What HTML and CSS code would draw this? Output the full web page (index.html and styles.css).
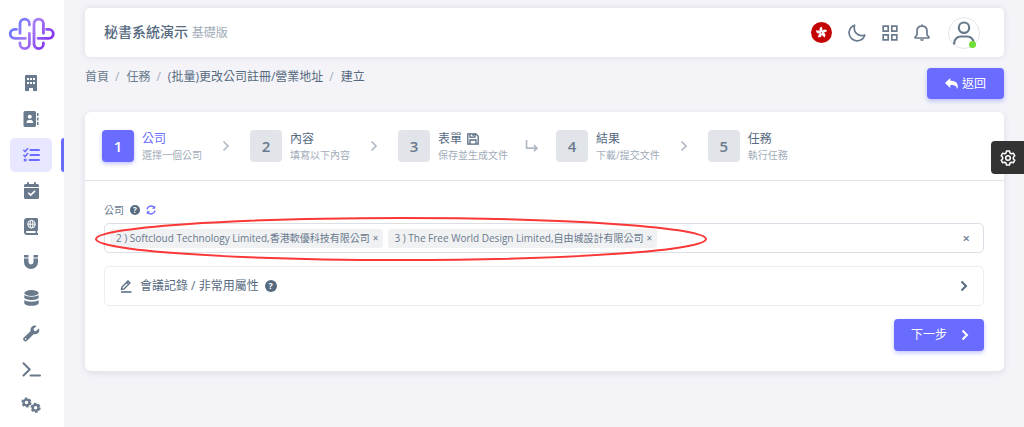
FILE: index.html
```html
<!DOCTYPE html>
<html lang="zh-Hant">
<head>
<meta charset="utf-8">
<meta name="viewport" content="width=device-width, initial-scale=1">
<title>秘書系統演示</title>
<link rel="stylesheet" href="styles.css">
</head>
<body>
<aside class="sidebar">
  <a class="logo" href="#" aria-label="主頁">
    <svg width="48" height="34" viewBox="0 0 48 34" fill="none" stroke="url(#brand)" stroke-width="2.800" stroke-linecap="round">
      <defs><linearGradient id="brand" gradientUnits="userSpaceOnUse" x1="4" y1="4" x2="42" y2="30"><stop offset="0" stop-color="#5a78ff"/><stop offset=".45" stop-color="#a77bf5"/><stop offset="1" stop-color="#7a2bea"/></linearGradient></defs>
      <path d="M12 16.300V6.800a4.700 4.700 0 0 1 9.400 0V8"/>
      <path d="M26 16.300V6.800a4.700 4.700 0 0 1 9.400 0V16.300"/>
      <path d="M8.500 12.300H6.700a4.500 4.500 0 0 0 0 9H17.500"/>
      <path d="M38.500 12.300h2.300a4.500 4.500 0 0 1 0 9H30"/>
      <path d="M21.400 16.500V27a4.700 4.700 0 0 1-9.400 0v-1"/>
      <path d="M26 16.500V27a4.700 4.700 0 0 0 9.400 0v-1"/>
    </svg>
  </a>
  <nav class="menu" aria-label="主選單">
    <a href="#" aria-label="公司"><svg width="14" height="18" viewBox="0 0 14 18"><path fill="currentColor" fill-rule="evenodd" d="M2 1h10a1 1 0 0 1 1 1v15H9v-3H5v3H1V2a1 1 0 0 1 1-1ZM3 4v2h2V4Zm3 0v2h2V4Zm3 0v2h2V4ZM3 8v2h2V8Zm3 0v2h2V8Zm3 0v2h2V8Z"/></svg></a>
    <a href="#" aria-label="聯絡人"><svg width="16" height="16" viewBox="0 0 16 16"><path fill="currentColor" fill-rule="evenodd" d="M2 0h9.500a1.500 1.500 0 0 1 1.500 1.500v13a1.500 1.500 0 0 1-1.500 1.500H2a1.500 1.500 0 0 1-1.500-1.500v-13A1.500 1.500 0 0 1 2 0Zm4.800 3.700a2 2 0 1 0 0 4.100 2 2 0 0 0 0-4.100ZM3.500 12h6.600c0-2-1-3-2.300-3h-2c-1.300 0-2.300 1-2.300 3ZM14 2h1.500v3H14Zm0 4.500h1.500v3H14ZM14 11h1.500v3H14Z"/></svg></a>
    <a class="active" href="#" aria-label="任務" aria-current="page"><svg width="17" height="14" viewBox="0 0 17 14" fill="none" stroke="currentColor" stroke-width="2" stroke-linecap="round"><path d="M7.500 2H16M7.500 7H16M6.500 12H16"/><path stroke-width="1.500" d="m.8 2.300 1.300 1.300 2.600-3M.8 7.300l1.300 1.300 2.600-3"/><circle cx="2.200" cy="12" r=".6"/></svg></a>
    <a href="#" aria-label="行事曆"><svg width="15" height="17" viewBox="0 0 15 17"><path fill="currentColor" fill-rule="evenodd" d="M3 1a1 1 0 0 1 2 0v1h5V1a1 1 0 0 1 2 0v1h1.500A1.500 1.500 0 0 1 15 3.500V5H0V3.500A1.500 1.500 0 0 1 1.500 2H3ZM0 6h15v9.500a1.500 1.500 0 0 1-1.500 1.500h-12A1.500 1.500 0 0 1 0 15.500Zm10.500 2.300L6.700 12 4.800 10.200l-1.100 1.100 3 2.900L11.600 9.400Z"/></svg></a>
    <a href="#" aria-label="法例"><svg width="14" height="17" viewBox="0 0 14 17"><path fill="currentColor" fill-rule="evenodd" d="M3 0h10a1 1 0 0 1 1 1v11l-.8 1v2H14v2H3a3 3 0 0 1-3-3V3a3 3 0 0 1 3-3Zm0 13a1 1 0 0 0 0 2h8.500v-2Z"/><g fill="none" stroke="#fff" stroke-width="1"><circle cx="7.500" cy="6.200" r="3.800"/><ellipse cx="7.500" cy="6.200" rx="1.500" ry="3.800"/><path d="M3.700 6.200h7.600"/></g></svg></a>
    <a href="#" aria-label="磁鐵"><svg width="14" height="15" viewBox="0 0 14 15"><path fill="currentColor" d="M0 1h4.500v2.500H0ZM9.500 1H14v2.500H9.500ZM0 4.500h4.500V8a2.500 2.500 0 0 0 5 0V4.500H14V8A7 7 0 0 1 0 8Z"/></svg></a>
    <a href="#" aria-label="資料庫"><svg width="15" height="16" viewBox="0 0 15 16" fill="currentColor"><ellipse cx="7.500" cy="3" rx="7.200" ry="2.900"/><path d="M.3 5c2.500 2.300 11.900 2.300 14.400 0v2.700c-1 3-13.400 3-14.400 0ZM.3 10c2.500 2.300 11.900 2.300 14.400 0v3.200c-1 3.500-13.400 3.500-14.400 0Z"/></svg></a>
    <a href="#" aria-label="工具"><svg width="17" height="17" viewBox="0 0 17 17"><path fill="currentColor" fill-rule="evenodd" d="M15.900 3.300 13 6.200l-2-.4-.4-2 2.900-2.900C10.500-.3 6.900 2 7.500 6.200L.9 12.600a2.100 2.100 0 0 0 3.200 3.200l6.500-6.500c4.300.5 6.700-2.500 5.300-6ZM2.700 13.300a.8.8 0 1 1 0 1.600.8.800 0 0 1 0-1.600Z"/></svg></a>
    <a href="#" aria-label="終端"><svg width="19" height="15" viewBox="0 0 19 15" fill="none" stroke="currentColor" stroke-width="2" stroke-linecap="round" stroke-linejoin="round"><path d="m1.500 1.200 6.200 6.300-6.200 6M8.500 13.500h9.500"/></svg></a>
    <a href="#" aria-label="設定"><svg width="20" height="16" viewBox="0 0 20 16" fill="none" stroke="currentColor"><circle cx="5.500" cy="5.500" r="2.900" stroke-width="2.300"/><circle cx="5.500" cy="5.500" r="4.300" stroke-width="1.600" stroke-dasharray="2.500 2"/><circle cx="14.600" cy="10.800" r="2.900" stroke-width="2.300"/><circle cx="14.600" cy="10.800" r="4.300" stroke-width="1.600" stroke-dasharray="2.500 2"/></svg></a>
  </nav>
</aside>

<main class="page">
  <header class="navbar">
    <h1 class="brand">秘書系統演示 <small>基礎版</small></h1>
    <div class="tools">
      <button type="button" aria-label="語言"><svg width="21" height="21" viewBox="0 0 21 21"><circle cx="10.500" cy="10.500" r="10.500" fill="#c40404"/><g fill="#fff"><path id="petal" d="M10.500 10.300C7.500 8.700 8 5 11.200 4.700c-.8 1.500 1.800 3.300-.7 5.600Z"/><use href="#petal" transform="rotate(72 10.500 10.500)"/><use href="#petal" transform="rotate(144 10.500 10.500)"/><use href="#petal" transform="rotate(216 10.500 10.500)"/><use href="#petal" transform="rotate(288 10.500 10.500)"/></g></svg></button>
      <button type="button" aria-label="深色模式"><svg width="18" height="18" viewBox="0 0 18 18" fill="none" stroke="currentColor" stroke-width="1.700" stroke-linejoin="round"><path d="M6.500 1.200A8 8 0 1 0 16.800 11C10.500 13.200 4.800 8.500 6.500 1.200Z"/></svg></button>
      <button type="button" aria-label="應用"><svg width="16" height="16" viewBox="0 0 16 16" fill="none" stroke="currentColor" stroke-width="1.700"><path d="M1.200 1.200h5v5h-5ZM9.800 1.200h5v5h-5ZM1.200 9.800h5v5h-5ZM9.800 9.800h5v5h-5Z"/></svg></button>
      <button type="button" aria-label="通知"><svg width="16" height="18" viewBox="0 0 16 18" fill="none" stroke="currentColor" stroke-width="1.700" stroke-linejoin="round"><path d="M3 11V7.300C3 4 5 2.200 8 2.200S13 4 13 7.300V11l1.800 1.800V14H1.200v-1.200ZM8 .5v1.700"/><path d="M6 15.200h4a2 1.800 0 0 1-4 0Z" fill="currentColor" stroke="none"/></svg></button>
      <button type="button" class="avatar" aria-label="帳戶"><svg width="22" height="24" viewBox="0 0 22 24" fill="none" stroke="currentColor" stroke-width="2.200"><circle cx="11" cy="6.700" r="5.200"/><path d="M1.200 23.500v-1.500a6.500 6.500 0 0 1 6.500-6.500h6.600a6.500 6.500 0 0 1 6.500 6.500v1.500"/></svg><span class="online"></span></button>
    </div>
  </header>

  <div class="subhead">
    <nav aria-label="路徑"><ol class="crumbs"><li><a href="#">首頁</a></li><li><a href="#">任務</a></li><li><a class="strong" href="#">(批量)更改公司註冊/營業地址</a></li><li class="strong">建立</li></ol></nav>
    <button type="button" class="btn back"><svg width="13" height="11" viewBox="0 0 13 11"><path fill="currentColor" d="M5.300 0v2.800c5 0 7.700 2 7.500 6 0 .9-.6 1.700-1.200 2.200.5-3-1.800-4-6.300-3.900V10L0 5Z"/></svg>返回</button>
  </div>

  <section class="card">
    <ol class="steps">
      <li class="step current" aria-current="step"><span class="num">1</span><span class="label"><b>公司</b><small>選擇一個公司</small></span></li>
      <li class="sep" aria-hidden="true"><svg width="8" height="12" viewBox="0 0 8 12"><path d="m1.500 1.500 4.500 4.500-4.500 4.500"/></svg></li>
      <li class="step"><span class="num">2</span><span class="label"><b>內容</b><small>填寫以下內容</small></span></li>
      <li class="sep" aria-hidden="true"><svg width="8" height="12" viewBox="0 0 8 12"><path d="m1.500 1.500 4.500 4.500-4.500 4.500"/></svg></li>
      <li class="step"><span class="num">3</span><span class="label"><b>表單 <svg width="12" height="12" viewBox="0 0 12 12" fill="none" stroke="currentColor" stroke-width="1.300"><path d="M.8.8h8l2.400 2.400v8H.8ZM3 .8v3.400h5V.8M3 11V7h6v4M6.200 1v2"/></svg></b><small>保存並生成文件</small></span></li>
      <li class="sep" aria-hidden="true"><svg width="14" height="14" viewBox="0 0 14 14"><path d="M1.500 1v8.200h10M9 6.200l3 3-3 3"/></svg></li>
      <li class="step"><span class="num">4</span><span class="label"><b>結果</b><small>下載/提交文件</small></span></li>
      <li class="sep" aria-hidden="true"><svg width="8" height="12" viewBox="0 0 8 12"><path d="m1.500 1.500 4.500 4.500-4.500 4.500"/></svg></li>
      <li class="step"><span class="num">5</span><span class="label"><b>任務</b><small>執行任務</small></span></li>
    </ol>

    <form class="form">
      <div class="field-label"><span id="company">公司</span><span class="help">?</span>
        <button type="button" class="refresh" aria-label="重新整理"><svg width="10" height="10" viewBox="0 0 10 10" fill="none" stroke="currentColor" stroke-width="1.400"><path d="M1 4.300A4 4 0 0 1 8.200 2.700M9 5.700A4 4 0 0 1 1.800 7.300"/><path d="M9.200.6v3.200H6ZM.8 9.400V6.200H4Z" fill="currentColor" stroke="none"/></svg></button></div>
      <div class="select" role="group" aria-labelledby="company">
        <span class="tag">2 ) Softcloud Technology Limited,香港軟優科技有限公司<button type="button" aria-label="移除">×</button></span>
        <span class="tag">3 ) The Free World Design Limited,自由城設計有限公司<button type="button" aria-label="移除">×</button></span>
        <button type="button" class="clear" aria-label="清除">×</button>
        <svg class="mark" width="614" height="48" viewBox="0 0 614 48" aria-hidden="true"><ellipse cx="307" cy="24" rx="305" ry="21"/></svg>
      </div>
      <button type="button" class="accordion" aria-expanded="false">
        <svg width="12" height="13" viewBox="0 0 12 13" fill="none" stroke="currentColor" stroke-width="1.300"><path d="M1.500 9.500 2 7 8 1l2 2-6 6ZM6.700 2.300l2 2M1 12h10.500"/></svg>
        <span>會議記錄 / 非常用屬性</span><span class="help large">?</span>
        <svg class="arrow" width="8" height="12" viewBox="0 0 8 12" fill="none" stroke="currentColor" stroke-width="2"><path d="m1.500 1.500 4.500 4.500-4.500 4.500"/></svg>
      </button>
      <button type="submit" class="btn next">下一步<svg width="8" height="12" viewBox="0 0 8 12" fill="none" stroke="currentColor" stroke-width="2"><path d="m1.500 1.500 4.500 4.500-4.500 4.500"/></svg></button>
    </form>
  </section>
</main>

<button type="button" class="customizer" aria-label="外觀設定"><svg width="16" height="16" viewBox="0 0 16 16" fill="none" stroke="currentColor" stroke-width="1.500" stroke-linejoin="round"><path d="M6.500 1h3l.5 2 1.300.8 2-.6 1.500 2.600-1.500 1.400v1.600l1.500 1.400-1.500 2.600-2-.6L10 13l-.5 2h-3L6 13l-1.300-.8-2 .6-1.500-2.600 1.500-1.400V7.200L1.200 5.800l1.500-2.600 2 .6L6 3Z"/><circle cx="8" cy="8" r="2.300"/></svg></button>
</body>
</html>
```

FILE: styles.css
```css
* { box-sizing: border-box; }
body {
  margin: 0;
  display: flex;
  min-height: 100vh;
  background: #f3f3f8;
  color: #697a8d;
  font: 12px/18px "Open Sans", "Noto Sans CJK TC", sans-serif;
}
button { font: inherit; color: inherit; border: 0; padding: 0; background: none; cursor: pointer; }
a { color: inherit; text-decoration: none; }
ol { list-style: none; margin: 0; padding: 0; }
svg { display: block; flex: none; }

.sidebar {
  flex: none;
  width: 64px;
  display: flex;
  flex-direction: column;
  gap: 15px;
  padding: 17px 0 5px;
  background: #fff;
}
.logo { padding-left: 8px; }
.menu { flex: 1; display: flex; flex-direction: column; justify-content: space-between; }
.menu a {
  display: grid;
  place-items: center;
  width: 42px;
  height: 34px;
  margin-left: 10px;
  border-radius: 5px;
}
.menu .active { position: relative; color: #696cff; background: #e7e7ff; }
.menu .active::after {
  content: "";
  position: absolute;
  right: -12px;
  top: 0;
  width: 3px;
  height: 100%;
  border-radius: 3px 0 0 3px;
  background: #696cff;
}

.page { flex: 1; min-width: 0; padding: 8px 20px 20px 21px; }
.navbar {
  display: flex;
  align-items: center;
  justify-content: space-between;
  min-height: 49px;
  padding: 0 24px 0 19px;
  background: #fff;
  border-radius: 5px;
  box-shadow: 0 0 6px rgba(67, 89, 113, .12);
}
.brand { margin: 0; font-size: 14px; font-weight: 500; color: #566a7f; }
.brand small { font-size: 12px; font-weight: 400; color: #a1acb8; }
.tools { display: flex; align-items: center; gap: 16px; }
.avatar {
  position: relative;
  display: grid;
  place-items: center;
  width: 32px;
  height: 32px;
  margin-left: 2px;
  border: 1px solid #e2e5ea;
  border-radius: 50%;
}
.online {
  position: absolute;
  right: 3px;
  bottom: 0;
  width: 7px;
  height: 7px;
  border-radius: 50%;
  background: #71dd37;
}

.subhead { display: flex; justify-content: space-between; align-items: flex-start; padding: 11px 0 13px; }
.crumbs { display: flex; }
.crumbs li + li::before { content: "/"; padding: 0 7px 0 6px; font-weight: 400; color: #a1acb8; }
.crumbs .strong { color: #566a7f; }
.btn {
  display: flex;
  align-items: center;
  justify-content: center;
  color: #fff;
  background: #696cff;
  border-radius: 4px;
  box-shadow: 0 2px 4px rgba(105, 108, 255, .4);
}
.back { gap: 4px; padding: 7px 18px; line-height: 17px; }

.card { background: #fff; border-radius: 6px; box-shadow: 0 2px 6px rgba(67, 89, 113, .12); }
.steps { display: flex; align-items: center; height: 69px; padding: 0 17px; border-bottom: 1px solid #dfe1e8; }
.step { display: flex; align-items: center; gap: 8px; }
.num {
  display: grid;
  place-items: center;
  width: 32px;
  height: 32px;
  border-radius: 4px;
  background: #e1e4e8;
  font-size: 15px;
  font-weight: 600;
}
.label { display: flex; flex-direction: column; white-space: nowrap; }
.label b { display: flex; align-items: center; gap: 5px; font-weight: 400; line-height: 16px; color: #566a7f; }
.label small { font-size: 10px; line-height: 16px; color: #a1acb8; }
.current .num { color: #fff; background: #696cff; box-shadow: 0 2px 4px rgba(105, 108, 255, .4); }
.label b { margin-top: 1px; }
.current b { color: #696cff; }
.sep { display: grid; place-items: center; width: 48px; color: #b0b9c4; }
.sep svg { fill: none; stroke: currentColor; stroke-width: 1.7; }

.form { display: flex; flex-direction: column; padding: 20px 20px 20px 19px; }
.field-label { display: flex; align-items: center; gap: 6px; margin-bottom: 4px; font-size: 10px; }
.help {
  display: grid;
  place-items: center;
  width: 10px;
  height: 10px;
  border-radius: 50%;
  background: #566a7f;
  color: #fff;
  font-size: 8px;
  font-weight: 700;
  line-height: 10px;
}
.help.large { width: 12px; height: 12px; font-size: 9px; line-height: 12px; }
.refresh { color: #696cff; }
.select {
  position: relative;
  display: flex;
  align-items: center;
  gap: 5px;
  min-height: 30px;
  padding: 0 13px 0 5px;
  border: 1px solid #dcdfe5;
  border-radius: 5px;
}
.tag {
  display: flex;
  gap: 3px;
  padding: 0 5px 0 6px;
  border-radius: 3px;
  background: #f0f1f3;
  font-size: 10px;
  line-height: 19px;
  white-space: nowrap;
}
.clear { margin-left: auto; font-size: 13px; font-weight: 600; }
.mark { position: absolute; left: -11px; top: -9px; pointer-events: none; fill: none; stroke: #f93837; stroke-width: 2; }
.accordion {
  display: flex;
  align-items: center;
  gap: 8px;
  margin: 13px 0;
  padding: 10px 15px;
  border: 1px solid #eceef1;
  border-radius: 5px;
  color: #566a7f;
}
.accordion .help { margin-left: -2px; }
.arrow { margin-left: auto; }
.next { align-self: flex-end; gap: 14px; padding: 7px 15px 7px 17px; }
.customizer {
  position: fixed;
  right: 0;
  top: 141px;
  display: grid;
  place-items: center;
  width: 33px;
  height: 33px;
  border-radius: 4px 0 0 4px;
  background: #333;
  color: #fff;
}
```
